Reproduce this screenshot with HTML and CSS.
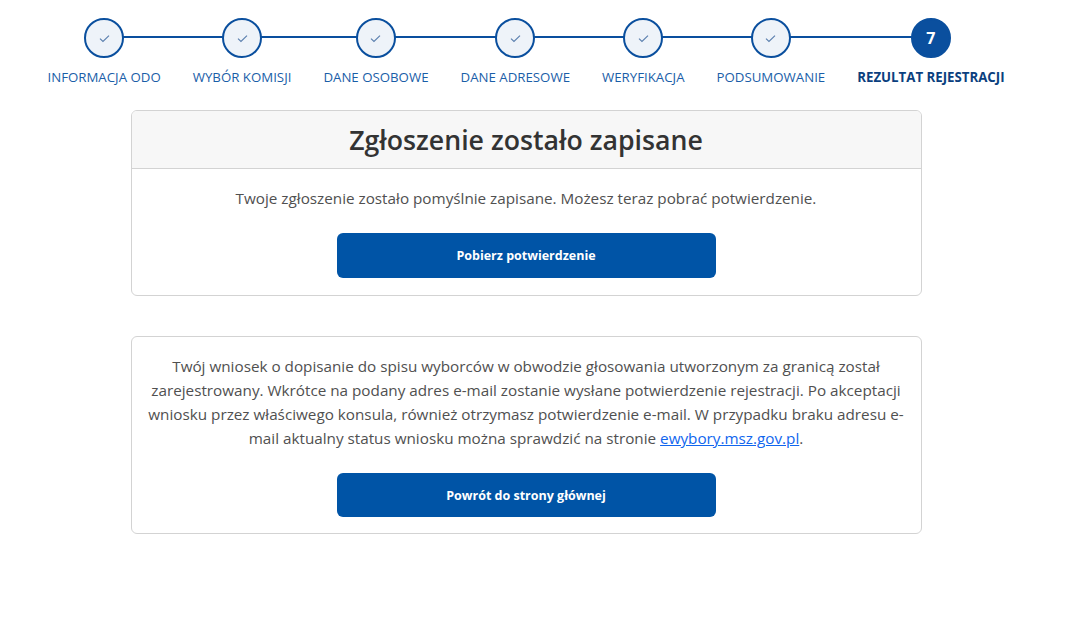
FILE: index.html
```html
<!DOCTYPE html>
<html lang="pl">
<head>
<meta charset="utf-8">
<title>Rezultat rejestracji</title>
<link rel="stylesheet" href="styles.css">
</head>
<body>
<div class="page">
  <ol class="stepper">
    <li class="step done"><span class="circle"><svg viewBox="0 0 12 10" class="check"><path d="M1 5.2 L4.3 8.2 L11 1.8"/></svg></span><span class="label">Informacja ODO</span></li>
    <li class="step done"><span class="circle"><svg viewBox="0 0 12 10" class="check"><path d="M1 5.2 L4.3 8.2 L11 1.8"/></svg></span><span class="label">Wybór komisji</span></li>
    <li class="step done"><span class="circle"><svg viewBox="0 0 12 10" class="check"><path d="M1 5.2 L4.3 8.2 L11 1.8"/></svg></span><span class="label">Dane osobowe</span></li>
    <li class="step done"><span class="circle"><svg viewBox="0 0 12 10" class="check"><path d="M1 5.2 L4.3 8.2 L11 1.8"/></svg></span><span class="label">Dane adresowe</span></li>
    <li class="step done"><span class="circle"><svg viewBox="0 0 12 10" class="check"><path d="M1 5.2 L4.3 8.2 L11 1.8"/></svg></span><span class="label">Weryfikacja</span></li>
    <li class="step done"><span class="circle"><svg viewBox="0 0 12 10" class="check"><path d="M1 5.2 L4.3 8.2 L11 1.8"/></svg></span><span class="label">Podsumowanie</span></li>
    <li class="step active"><span class="circle">7</span><span class="label">Rezultat rejestracji</span></li>
  </ol>

  <section class="card">
    <header class="card-header"><h1 class="title">Zgłoszenie zostało zapisane</h1></header>
    <div class="card-body">
      <p class="text">Twoje zgłoszenie zostało pomyślnie zapisane. Możesz teraz pobrać potwierdzenie.</p>
      <button class="btn">Pobierz potwierdzenie</button>
    </div>
  </section>

  <section class="card card-plain">
    <div class="card-body">
      <p class="text">Twój wniosek o dopisanie do spisu wyborców w obwodzie głosowania utworzonym za granicą został zarejestrowany. Wkrótce na podany adres e-mail zostanie wysłane potwierdzenie rejestracji. Po akceptacji wniosku przez właściwego konsula, również otrzymasz potwierdzenie e-mail. W przypadku braku adresu e-mail aktualny status wniosku można sprawdzić na stronie <a href="#" class="link">ewybory.msz.gov.pl</a>.</p>
      <button class="btn">Powrót do strony głównej</button>
    </div>
  </section>
</div>
</body>
</html>
```

FILE: styles.css
```css
* { box-sizing: border-box; }
html, body { margin: 0; padding: 0; background: #fff; }
body { font-family: "Open Sans", "Noto Sans", sans-serif; color: #444; }

.page { width: 1052px; padding-top: 18px; }

.stepper {
  list-style: none;
  margin: 0;
  padding: 0;
  display: flex;
  justify-content: center;
}
.step {
  position: relative;
  display: flex;
  flex-direction: column;
  align-items: center;
  padding: 0 16px;
}
.step::before, .step::after {
  content: "";
  position: absolute;
  top: 18px;
  height: 2px;
  background: #0a4f9e;
}
.step::before { left: 0; right: 50%; }
.step::after { left: 50%; right: 0; }
.step:first-child::before, .step:last-child::after { display: none; }

.circle {
  position: relative;
  z-index: 1;
  width: 40px;
  height: 40px;
  border-radius: 50%;
  border: 2px solid #0a4f9e;
  background: #eef3f9;
  display: flex;
  align-items: center;
  justify-content: center;
}
.check { width: 11px; height: 9px; fill: none; stroke: #5a7fae; stroke-width: 1.3; }
.active .circle { background: #0a4f9e; color: #fff; font-weight: 700; font-size: 16px; }

.label {
  margin-top: 9px;
  font-size: 13.25px;
  line-height: 20px;
  text-transform: uppercase;
  color: #1a5ea8;
  white-space: nowrap;
}
.active .label { font-weight: 700; color: #0b3f7e; }

.card {
  width: 791px;
  margin: 23px auto 0;
  border: 1px solid #d3d3d3;
  border-radius: 6px;
  overflow: hidden;
}
.card-plain { margin-top: 40px; }
.card-header {
  background: #f7f7f7;
  border-bottom: 1px solid #d3d3d3;
  padding: 11px 16px 11px;
}
.title {
  margin: 0;
  text-align: center;
  font-size: 26.7px;
  line-height: 35px;
  font-weight: 600;
  color: #333;
}
.card-body {
  padding: 17px 16px 17px;
  display: flex;
  flex-direction: column;
  align-items: center;
}
.card-plain .card-body { padding-bottom: 16px; }
.text {
  margin: 0 0 23px;
  text-align: center;
  font-size: 15.25px;
  line-height: 24px;
  color: #505050;
}
.link { color: #1166ee; text-decoration: underline; }
.btn {
  width: 379px;
  height: 45px;
  border: 0;
  border-radius: 6px;
  background: #0054a6;
  color: #fff;
  font-family: "Open Sans", "Noto Sans", sans-serif;
  font-weight: 700;
  font-size: 12.5px;
}
.card-plain .btn { height: 44px; }
```
